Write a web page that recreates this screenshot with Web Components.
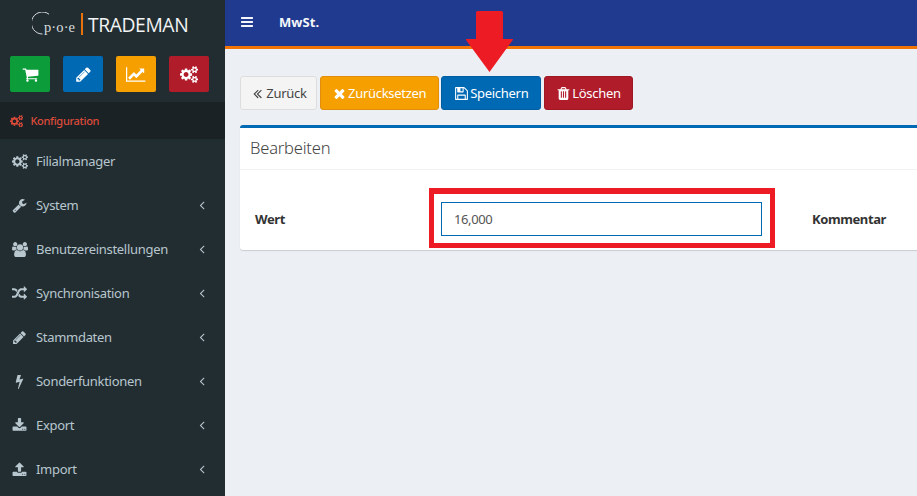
<!DOCTYPE html>
<html lang="de">
<head>
<meta charset="utf-8">
<title>MwSt.</title>
<style>
  html, body { margin: 0; height: 100%; overflow: hidden; }
  body { font-family: "Noto Sans", "Open Sans", sans-serif; letter-spacing: -.3px; background: #ecf0f5; }
</style>
</head>
<body>
<app-shell>
  <side-bar slot="side">
    <quick-btn slot="quick" icon="cart" color="#0d9c3a"></quick-btn>
    <quick-btn slot="quick" icon="pencil" color="#0069b4"></quick-btn>
    <quick-btn slot="quick" icon="chart" color="#f59f00"></quick-btn>
    <quick-btn slot="quick" icon="cogs" color="#b01c2a"></quick-btn>
    <nav-item icon="cogs" flat>Filialmanager</nav-item>
    <nav-item icon="wrench">System</nav-item>
    <nav-item icon="users">Benutzereinstellungen</nav-item>
    <nav-item icon="random">Synchronisation</nav-item>
    <nav-item icon="pencil">Stammdaten</nav-item>
    <nav-item icon="bolt">Sonderfunktionen</nav-item>
    <nav-item icon="download">Export</nav-item>
    <nav-item icon="upload">Import</nav-item>
  </side-bar>
  <top-bar slot="top">MwSt.</top-bar>
  <tool-row slot="main">
    <action-btn icon="angles" kind="plain" width="77">Zurück</action-btn>
    <action-btn icon="times" kind="warn" width="119">Zurücksetzen</action-btn>
    <action-btn icon="save" kind="primary" width="100">Speichern</action-btn>
    <action-btn icon="trash" kind="danger" width="89">Löschen</action-btn>
  </tool-row>
  <edit-box slot="main" heading="Bearbeiten" value="16,000"></edit-box>
</app-shell>

<script>
// Font Awesome 4 shapes, [viewBox width, path]
const ICONS = {
  cart: [1792, 'M704 1536q0 52-38 90t-90 38-90-38-38-90 38-90 90-38 90 38 38 90zm896 0q0 52-38 90t-90 38-90-38-38-90 38-90 90-38 90 38 38 90zm128-1088v512q0 24-16.5 42.5t-40.5 21.5l-1044 122q13 60 13 70 0 16-24 64h920q26 0 45 19t19 45-19 45-45 19h-1024q-26 0-45-19t-19-45q0-11 8-31.5t16-36 21.5-40 15.5-29.5l-177-823h-204q-26 0-45-19t-19-45 19-45 45-19h256q16 0 28.5 6.5t19.5 15.5 13 24.5 8 26 5.5 29.5 4.5 26h1201q26 0 45 19t19 45z'],
  pencil: [1792, 'M491 1536l91-91-235-235-91 91v107h128v128h107zm523-928q0-22-22-22-10 0-17 7l-542 542q-7 7-7 17 0 22 22 22 10 0 17-7l542-542q7-7 7-17zm-54-192l416 416-832 832h-416v-416zm683 96q0 53-37 90l-166 166-416-416 166-165q36-38 90-38 53 0 91 38l235 234q37 39 37 91z'],
  chart: [2048, 'M2048 1536v128h-2048v-1536h128v1408h1920zm-128-1248v435q0 21-19.5 29.5t-35.5-7.5l-121-121-633 633q-10 10-23 10t-23-10l-233-233-416 416-192-192 585-585q10-10 23-10t23 10l233 233 464-464-121-121q-16-16-7.5-35.5t29.5-19.5h435q14 0 23 9t9 23z'],
  cogs: [1920, 'M896 896q0-106-75-181t-181-75-181 75-75 181 75 181 181 75 181-75 75-181zm768 512q0-52-38-90t-90-38-90 38-38 90q0 53 37.5 90.5t90.5 37.5 90.5-37.5 37.5-90.5zm0-1024q0-52-38-90t-90-38-90 38-38 90q0 53 37.5 90.5t90.5 37.5 90.5-37.5 37.5-90.5zm-384 421v185q0 10-7 19.5t-16 10.5l-155 24q-11 35-32 76 34 48 90 115 7 11 7 20 0 12-7 19-23 30-82.5 89.5t-78.5 59.5q-11 0-21-7l-115-90q-37 19-77 31-11 108-23 155-7 24-30 24h-186q-11 0-20-7.5t-10-17.5l-23-153q-34-10-75-31l-118 89q-7 7-20 7-11 0-21-8-144-133-144-160 0-9 7-19 10-14 41-53t47-61q-23-44-35-82l-152-24q-10-1-17-9.5t-7-19.5v-185q0-10 7-19.5t16-10.5l155-24q11-35 32-76-34-48-90-115-7-11-7-20 0-12 7-20 22-30 82-89t79-59q11 0 21 7l115 90q34-18 77-32 11-108 23-154 7-24 30-24h186q11 0 20 7.5t10 17.5l23 153q34 10 75 31l118-89q8-7 20-7 11 0 21 8 144 133 144 160 0 8-7 19-12 16-42 54t-45 60q23 48 34 82l152 23q10 2 17 10.5t7 19.5zm640 533v140q0 16-149 31-12 27-30 52 51 113 51 138 0 4-4 7-122 71-124 71-8 0-46-47t-52-68q-20 2-30 2t-30-2q-14 21-52 68t-46 47q-2 0-124-71-4-3-4-7 0-25 51-138-18-25-30-52-149-15-149-31v-140q0-16 149-31 13-29 30-52-51-113-51-138 0-4 4-7 4-2 35-20t59-34 30-16q8 0 46 46.5t52 67.5q20-2 30-2t30 2q51-71 92-112l6-2q4 0 124 70 4 3 4 7 0 25-51 138 17 23 30 52 149 15 149 31zm0-1024v140q0 16-149 31-12 27-30 52 51 113 51 138 0 4-4 7-122 71-124 71-8 0-46-47t-52-68q-20 2-30 2t-30-2q-14 21-52 68t-46 47q-2 0-124-71-4-3-4-7 0-25 51-138-18-25-30-52-149-15-149-31v-140q0-16 149-31 13-29 30-52-51-113-51-138 0-4 4-7 4-2 35-20t59-34 30-16q8 0 46 46.5t52 67.5q20-2 30-2t30 2q51-71 92-112l6-2q4 0 124 70 4 3 4 7 0 25-51 138 17 23 30 52 149 15 149 31z'],
  wrench: [1792, 'M448 1472q0-26-19-45t-45-19-45 19-19 45 19 45 45 19 45-19 19-45zm644-420l-682 682q-37 37-90 37-52 0-91-37l-106-108q-38-36-38-90 0-53 38-91l680-680q39 98 114.5 173.5t173.5 114.5zm634-435q0 39-23 106-47 134-164.5 217.5t-258.5 83.5q-185 0-316.5-131.5t-131.5-316.5 131.5-316.5 316.5-131.5q58 0 121.5 16.5t107.5 46.5q16 11 16 28t-16 28l-293 169v224l193 107q5-3 79-48.5t135.5-81 70.5-35.5q15 0 23.5 10t8.5 25z'],
  users: [1920, 'M593 896q-162 5-265 128h-134q-82 0-138-40.5t-56-118.5q0-353 124-353 6 0 43.5 21t97.5 42.5 119 21.5q67 0 133-23-5 37-5 66 0 139 81 256zm1071 637q0 120-73 189.5t-194 69.5h-874q-121 0-194-69.5t-73-189.5q0-53 3.5-103.5t14-109 26.5-108.5 43-97.5 62-81 85.5-53.5 111.5-20q10 0 43 21.5t73 48 107 48 135 21.5 135-21.5 107-48 73-48 43-21.5q61 0 111.5 20t85.5 53.5 62 81 43 97.5 26.5 108.5 14 109 3.5 103.5zm-1024-1277q0 106-75 181t-181 75-181-75-75-181 75-181 181-75 181 75 75 181zm704 384q0 159-112.5 271.5t-271.5 112.5-271.5-112.5-112.5-271.5 112.5-271.5 271.5-112.5 271.5 112.5 112.5 271.5zm576 225q0 78-56 118.5t-138 40.5h-134q-103-123-265-128 81-117 81-256 0-29-5-66 66 23 133 23 59 0 119-21.5t97.5-42.5 43.5-21q124 0 124 353zm-128-609q0 106-75 181t-181 75-181-75-75-181 75-181 181-75 181 75 75 181z'],
  random: [1792, 'M666 481q-60 92-137 273-22-45-37-72.5t-40.5-63.5-51-56.5-63-35-81.5-14.5h-224q-14 0-23-9t-9-23v-192q0-14 9-23t23-9h224q250 0 410 225zm1126 799q0 14-9 23l-320 320q-9 9-23 9-13 0-22.5-9.5t-9.5-22.5v-192q-32 0-85 .5t-81 1-73-1-71-5-64-10.5-63-18.5-58-28.5-59-40-55-53.5-56-69.5q59-93 136-273 22 45 37 72.5t40.5 63.5 51 56.5 63 35 81.5 14.5h256v-192q0-14 9-23t23-9q12 0 24 10l319 319q9 9 9 23zm0-896q0 14-9 23l-320 320q-9 9-23 9-13 0-22.5-9.5t-9.5-22.5v-192h-256q-48 0-87 15t-69 45-51 61.5-45 77.5q-32 62-78 171-29 66-49.5 111t-54 105-64 100-74 83-90 68.5-106.5 42-128 16.5h-224q-14 0-23-9t-9-23v-192q0-14 9-23t23-9h224q48 0 87-15t69-45 51-61.5 45-77.5q32-62 78-171 29-66 49.5-111t54-105 64-100 74-83 90-68.5 106.5-42 128-16.5h256v-192q0-14 9-23t23-9q12 0 24 10l319 319q9 9 9 23z'],
  bolt: [1792, 'M1333 566q18 20 7 44l-540 1157q-13 25-42 25-4 0-14-2-17-5-25.5-19t-4.5-30l197-808-406 101q-4 1-12 1-18 0-31-11-18-15-13-39l201-825q4-14 16-23t28-9h328q19 0 32 12.5t13 29.5q0 8-5 18l-171 463 396-98q8-2 12-2 19 0 34 15z'],
  download: [1792, 'M1344 1344q0-26-19-45t-45-19-45 19-19 45 19 45 45 19 45-19 19-45zm256 0q0-26-19-45t-45-19-45 19-19 45 19 45 45 19 45-19 19-45zm128-224v320q0 40-28 68t-68 28h-1472q-40 0-68-28t-28-68v-320q0-40 28-68t68-28h465l135 136q58 56 136 56t136-56l136-136h464q40 0 68 28t28 68zm-325-569q17 41-14 70l-448 448q-18 19-45 19t-45-19l-448-448q-31-29-14-70 17-39 59-39h256v-448q0-26 19-45t45-19h256q26 0 45 19t19 45v448h256q42 0 59 39z'],
  upload: [1792, 'M1344 1472q0-26-19-45t-45-19-45 19-19 45 19 45 45 19 45-19 19-45zm256 0q0-26-19-45t-45-19-45 19-19 45 19 45 45 19 45-19 19-45zm128-224v320q0 40-28 68t-68 28h-1472q-40 0-68-28t-28-68v-320q0-40 28-68t68-28h427q21 56 70.5 92t110.5 36h256q61 0 110.5-36t70.5-92h427q40 0 68 28t28 68zm-325-648q-17 40-59 40h-256v448q0 26-19 45t-45 19h-256q-26 0-45-19t-19-45v-448h-256q-42 0-59-40-17-39 14-69l448-448q18-19 45-19t45 19l448 448q31 30 14 69z'],
  angle: [1792, 'M1203 544q0 13-10 23l-393 393 393 393q10 10 10 23t-10 23l-50 50q-10 10-23 10t-23-10l-466-466q-10-10-10-23t10-23l466-466q10-10 23-10t23 10l50 50q10 10 10 23z'],
  angles: [1792, 'M1011 1376q0 13-10 23l-50 50q-10 10-23 10t-23-10l-466-466q-10-10-10-23t10-23l466-466q10-10 23-10t23 10l50 50q10 10 10 23t-10 23l-393 393 393 393q10 10 10 23zm384 0q0 13-10 23l-50 50q-10 10-23 10t-23-10l-466-466q-10-10-10-23t10-23l466-466q10-10 23-10t23 10l50 50q10 10 10 23t-10 23l-393 393 393 393q10 10 10 23z'],
  times: [1792, 'M1490 1322q0 40-28 68l-136 136q-28 28-68 28t-68-28l-294-294-294 294q-28 28-68 28t-68-28l-136-136q-28-28-28-68t28-68l294-294-294-294q-28-28-28-68t28-68l136-136q28-28 68-28t68 28l294 294 294-294q28-28 68-28t68 28l136 136q28 28 28 68t-28 68l-294 294 294 294q28 28 28 68z'],
  save: [1792, 'M512 1536h768v-384h-768v384zm896 0h128v-896q0-14-10-38.5t-20-34.5l-281-281q-10-10-34-20t-39-10v416q0 40-28 68t-68 28h-576q-40 0-68-28t-28-68v-416h-128v1280h128v-416q0-40 28-68t68-28h832q40 0 68 28t28 68v416zm-384-928v-320q0-13-9.5-22.5t-22.5-9.5h-192q-13 0-22.5 9.5t-9.5 22.5v320q0 13 9.5 22.5t22.5 9.5h192q13 0 22.5-9.5t9.5-22.5zm640 32v928q0 40-28 68t-68 28h-1344q-40 0-68-28t-28-68v-1344q0-40 28-68t68-28h928q40 0 88 20t76 48l280 280q28 28 48 76t20 88z'],
  trash: [1792, 'M704 1376v-704q0-14-9-23t-23-9h-64q-14 0-23 9t-9 23v704q0 14 9 23t23 9h64q14 0 23-9t9-23zm256 0v-704q0-14-9-23t-23-9h-64q-14 0-23 9t-9 23v704q0 14 9 23t23 9h64q14 0 23-9t9-23zm256 0v-704q0-14-9-23t-23-9h-64q-14 0-23 9t-9 23v704q0 14 9 23t23 9h64q14 0 23-9t9-23zm-544-992h448l-48-117q-7-9-17-11h-317q-10 2-17 11zm928 32v64q0 14-9 23t-23 9h-96v948q0 83-47 143.5t-113 60.5h-832q-66 0-113-58.5t-47-141.5v-952h-96q-14 0-23-9t-9-23v-64q0-14 9-23t23-9h309l70-167q15-37 54-63t79-26h320q40 0 79 26t54 63l70 167h309q14 0 23 9t9 23z'],
  bars: [1792, 'M1664 1344v128q0 26-19 45t-45 19h-1408q-26 0-45-19t-19-45v-128q0-26 19-45t45-19h1408q26 0 45 19t19 45zm0-512v128q0 26-19 45t-45 19h-1408q-26 0-45-19t-19-45v-128q0-26 19-45t45-19h1408q26 0 45 19t19 45zm0-512v128q0 26-19 45t-45 19h-1408q-26 0-45-19t-19-45v-128q0-26 19-45t45-19h1408q26 0 45 19t19 45z']
}

function icon(name, size) {
  const [w, d] = ICONS[name]
  const width = size * w / 1792
  return `<svg aria-hidden="true" width="${width}" height="${size}" viewBox="0 0 ${w} 1792" fill="currentColor"><path d="${d}"/></svg>`
}

class AppShell extends HTMLElement {
  constructor() {
    super()
    this.attachShadow({ mode: 'open' }).innerHTML = `
      <style>
        :host { display: grid; grid-template-columns: 225px 1fr; grid-template-rows: 49px 1fr; width: 917px; height: 496px; overflow: hidden; position: relative; }
        .side { grid-row: 1 / 3; display: block; }
        main { padding: 27px 0 0 15px; display: flex; flex-direction: column; min-width: 0; }
        svg.arrow { position: absolute; left: 466px; top: 11px; }
        .mark { position: absolute; left: 429px; top: 188px; width: 346px; height: 60px; box-sizing: border-box; border: 5px solid #ed1c24; border-top-width: 6px; }
      </style>
      <div class="side"><slot name="side"></slot></div>
      <slot name="top"></slot>
      <main><slot name="main"></slot></main>
      <div class="mark"></div>
      <svg class="arrow" width="47" height="61" viewBox="0 0 47 61" aria-hidden="true"><path fill="#ed1c24" d="M11.500 0h24a1.500 1.500 0 0 1 1.500 1.500V28h9.500a.5.500 0 0 1 .3.900L23.500 61 0 29a.5.500 0 0 1 .4-1H10V1.500A1.500 1.500 0 0 1 11.500 0z"/></svg>`
  }
}

class SideBar extends HTMLElement {
  constructor() {
    super()
    this.attachShadow({ mode: 'open' }).innerHTML = `
      <style>
        :host { display: block; width: 225px; height: 496px; background: #222d32; overflow: hidden; }
        .logo { height: 56px; display: flex; align-items: center; box-sizing: border-box; padding: 0 0 8px 32px; color: #eef1f2; position: relative; }
        .logo svg { position: absolute; left: 32px; top: 12px; }
        .poe { font: 14.500px "Liberation Serif", serif; width: 49px; padding-left: 12px; box-sizing: border-box; margin-top: 6px; letter-spacing: .1px; white-space: nowrap; color: #d8dcde; }
        .bar { width: 2px; height: 22px; background: #e8730c; margin: 0 5px 0 0; }
        .name { font: 400 19.300px "Open Sans", sans-serif; letter-spacing: -.4px; color: #f2f4f5; }
        .quick { display: flex; gap: 13px; padding: 0 0 0 10px; height: 46px; }
        .head { height: 37px; background: #1a2226; color: #dd4b39; font-size: 11px; font-weight: 500; display: flex; align-items: center; gap: 7px; padding-left: 10px; }
        .head svg { margin-top: 1px; }
      </style>
      <div class="logo">
        <svg width="26" height="26" viewBox="0 0 26 26" fill="none" stroke="#d8dcde" aria-hidden="true"><path d="M17 2.200A11 11 0 1 0 10.500 22"/></svg>
        <span class="poe">p·o·e</span><span class="bar"></span><span class="name">TRADEMAN</span>
      </div>
      <div class="quick"><slot name="quick"></slot></div>
      <div class="head">${icon('cogs', 12.500)}<span>Konfiguration</span></div>
      <nav><slot></slot></nav>`
  }
}

class QuickBtn extends HTMLElement {
  constructor() {
    super()
    const name = this.getAttribute('icon')
    this.attachShadow({ mode: 'open' }).innerHTML = `
      <style>
        :host { display: block; width: 40px; height: 36px; border-radius: 2px; color: #fff; box-shadow: inset 0 0 0 1px rgba(0,0,0,.08); }
        div { height: 100%; display: flex; align-items: center; justify-content: center; border-radius: inherit; }
      </style>
      <div style="background:${this.getAttribute('color')}">${icon(name, 17)}</div>`
  }
}

class NavItem extends HTMLElement {
  constructor() {
    super()
    const caret = this.hasAttribute('flat') ? '' : `<span class="caret">${icon('angle', 14)}</span>`
    this.attachShadow({ mode: 'open' }).innerHTML = `
      <style>
        :host { display: block; color: #b8c7ce; font-size: 13px; }
        a { height: 44px; display: flex; align-items: center; padding: 0 16px 0 12px; }
        .ico { width: 24px; flex: none; display: flex; }
        .label { flex: 1; white-space: nowrap; }
        .caret { display: flex; }
      </style>
      <a><span class="ico">${icon(this.getAttribute('icon'), 15)}</span><span class="label"><slot></slot></span>${caret}</a>`
  }
}

class TopBar extends HTMLElement {
  constructor() {
    super()
    this.attachShadow({ mode: 'open' }).innerHTML = `
      <style>
        :host { display: block; background: #1f3a8e; border-bottom: 3px solid #f27405; box-sizing: border-box; height: 49px; color: #f4f6fb; }
        div { height: 46px; display: flex; align-items: center; padding-left: 15px; box-sizing: border-box; }
        b { margin-left: 25px; font-size: 13px; font-weight: 700; letter-spacing: .1px; padding-bottom: 2px; }
        svg { margin-bottom: 2px; }
      </style>
      <div>${icon('bars', 14)}<b><slot></slot></b></div>`
  }
}

class ToolRow extends HTMLElement {
  constructor() {
    super()
    this.attachShadow({ mode: 'open' }).innerHTML = `
      <style>:host { display: flex; gap: 2.670px; }</style><slot></slot>`
  }
}

const KINDS = {
  plain: ['#f4f4f4', '#ddd', '#444'],
  warn: ['#f59f00', '#e08e0b', '#fff'],
  primary: ['#0069b4', '#005da0', '#fff'],
  danger: ['#b01c2a', '#9f1925', '#fff']
}

class ActionBtn extends HTMLElement {
  constructor() {
    super()
    const [bg, line, fg] = KINDS[this.getAttribute('kind')]
    this.attachShadow({ mode: 'open' }).innerHTML = `
      <style>
        :host { display: block; width: ${this.getAttribute('width')}px; }
        button { all: unset; box-sizing: border-box; width: 100%; height: 34px; display: flex; align-items: center; justify-content: center; gap: 1px; font-size: 13px; border-radius: 3px; border: 1px solid ${line}; background: ${bg}; color: ${fg}; white-space: nowrap; }
      </style>
      <button>${icon(this.getAttribute('icon'), 15)}<slot></slot></button>`
  }
}

class EditBox extends HTMLElement {
  constructor() {
    super()
    this.attachShadow({ mode: 'open' }).innerHTML = `
      <style>
        :host { display: block; margin-top: 15px; background: #fff; border-top: 3px solid #0069b4; border-radius: 3px 0 0 3px; box-shadow: 0 1px 1px rgba(0,0,0,.15); height: 125px; box-sizing: border-box; color: #333; }
        h3 { margin: 0; height: 41px; padding: 0 0 0 10px; font-size: 16.500px; font-weight: 300; letter-spacing: -.2px; line-height: 40px; color: #444; border-bottom: 1px solid #f2f2f2; }
        .row { display: grid; grid-template-columns: 186px 321px 1fr; align-items: center; box-sizing: border-box; height: 80px; padding: 18px 0 0 15px; font-size: 13px; font-weight: 700; letter-spacing: -.4px; }
        .field { box-sizing: border-box; height: 34px; border: 1px solid #0069b4; padding: 0 12px; display: flex; align-items: center; font-weight: 400; color: #555; }
        .note { padding-left: 50px; }
      </style>
      <h3>${this.getAttribute('heading')}</h3>
      <div class="row"><span>Wert</span><div class="field">${this.getAttribute('value')}</div><span class="note">Kommentar</span></div>`
  }
}

customElements.define('app-shell', AppShell)
customElements.define('side-bar', SideBar)
customElements.define('quick-btn', QuickBtn)
customElements.define('nav-item', NavItem)
customElements.define('top-bar', TopBar)
customElements.define('tool-row', ToolRow)
customElements.define('action-btn', ActionBtn)
customElements.define('edit-box', EditBox)
</script>
</body>
</html>
